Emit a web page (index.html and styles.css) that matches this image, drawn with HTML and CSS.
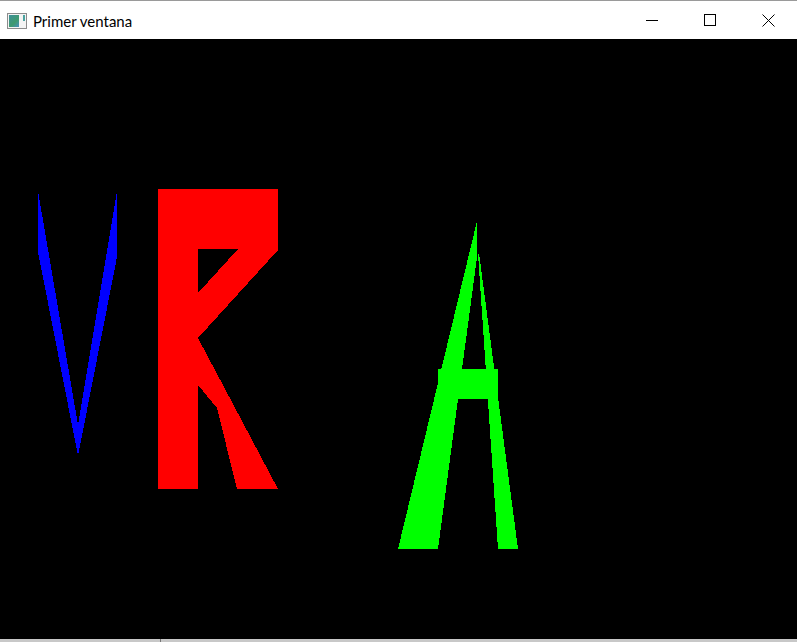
FILE: index.html
```html
<!DOCTYPE html>
<html lang="es">
<head>
<meta charset="utf-8">
<title>Primer ventana</title>
<link rel="stylesheet" href="styles.css">
</head>
<body>
<div class="window">
  <div class="titlebar">
    <div class="title">
      <span class="app-icon"><span class="app-icon-fill"></span><span class="app-icon-bar"></span></span>
      <span class="title-text">Primer ventana</span>
    </div>
    <div class="controls">
      <div class="ctrl">
        <svg width="12" height="12" viewBox="0 0 12 12"><path d="M0 6.5H12" stroke="#000" stroke-width="1" shape-rendering="crispEdges"/></svg>
      </div>
      <div class="ctrl">
        <svg width="12" height="12" viewBox="0 0 12 12"><rect x="0.5" y="0.5" width="11" height="11" fill="none" stroke="#000" stroke-width="1"/></svg>
      </div>
      <div class="ctrl">
        <svg width="13" height="13" viewBox="0 0 13 13"><path d="M0.5 0.5L12.5 12.5M12.5 0.5L0.5 12.5" stroke="#000" stroke-width="1"/></svg>
      </div>
    </div>
  </div>
  <div class="canvas">
    <svg class="scene" width="797" height="600" viewBox="0 39 797 600" shape-rendering="crispEdges">
      <polygon fill="#0000ff" points="38,191 38,252 78,456 117,257 117,191 78,425"/>
      <path fill="#ff0000" fill-rule="evenodd" d="M158 189 L278 189 L278 250 L198 338 L278 489 L237 489 L217 408 L198 385 L198 489 L158 489 Z M198 249 L238 249 L198 293 Z"/>
      <polygon fill="#00ff00" points="477,221 398,549 438,549 477,257"/>
      <polygon fill="#00ff00" points="478,254 479,253 518,549 498,549"/>
      <rect fill="#00ff00" x="438" y="369" width="60" height="30"/>
    </svg>
  </div>
  <div class="bottom"><span class="bottom-mark"></span></div>
</div>
</body>
</html>
```
FILE: styles.css
```css
html, body {
  margin: 0;
  padding: 0;
  background: #000;
}
.window {
  width: 797px;
  height: 642px;
  display: flex;
  flex-direction: column;
  overflow: hidden;
}
.titlebar {
  height: 38px;
  border-top: 1px solid #9a9a9a;
  background: #fff;
  display: flex;
  align-items: center;
  justify-content: space-between;
}
.title {
  display: flex;
  align-items: center;
  padding-left: 7px;
  gap: 6px;
}
.app-icon {
  width: 16px;
  height: 12px;
  border: 1px solid #8c8c8c;
  background: #f4f4f4;
  display: flex;
  align-items: stretch;
  gap: 2px;
  padding: 1px;
  box-sizing: content-box;
  margin-top: 1px;
}
.app-icon-fill {
  width: 10px;
  background: linear-gradient(135deg, #3d8f9a 0%, #3e9a6e 60%, #4b8fbf 100%);
}
.app-icon-bar {
  width: 2px;
  height: 6px;
  background: #4aa3a0;
  margin-left: 2px;
}
.title-text {
  font-family: Lato, "Noto Sans", sans-serif;
  font-size: 15px;
  color: #000;
  line-height: 18px;
  margin-top: 1px;
}
.controls {
  display: flex;
  height: 100%;
}
.ctrl {
  width: 58px;
  height: 100%;
  display: flex;
  align-items: center;
  justify-content: center;
}
.ctrl svg {
  display: block;
}
.canvas {
  height: 600px;
  background: #000;
}
.scene {
  display: block;
}
.bottom {
  flex: 1;
  background: #c8c8c8;
  position: relative;
}
.bottom-mark {
  position: absolute;
  left: 160px;
  top: 0;
  width: 1px;
  height: 3px;
  background: #777;
}
```
